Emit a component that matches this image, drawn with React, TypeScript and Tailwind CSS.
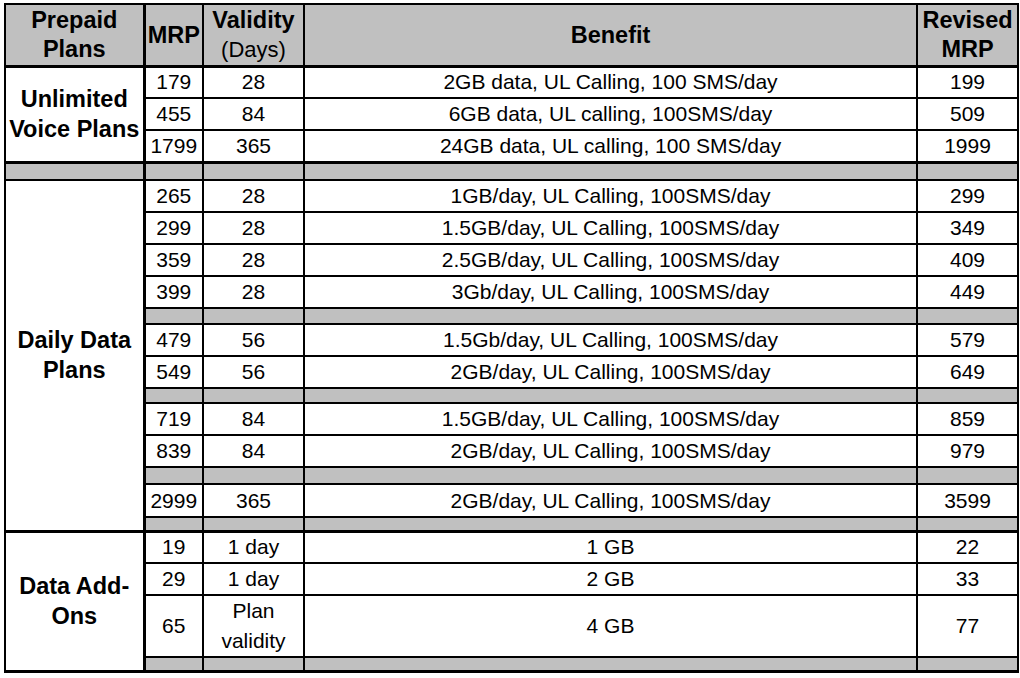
import React from 'react'

type Row = { mrp: string; validity: React.ReactNode; benefit: string; revised: string; h?: string }
type Item = Row | 'band'

const voice: Row[] = [
  { mrp: '179', validity: '28', benefit: '2GB data, UL Calling, 100 SMS/day', revised: '199' },
  { mrp: '455', validity: '84', benefit: '6GB data, UL calling, 100SMS/day', revised: '509' },
  { mrp: '1799', validity: '365', benefit: '24GB data, UL calling, 100 SMS/day', revised: '1999' },
]

const daily: Item[] = [
  { mrp: '265', validity: '28', benefit: '1GB/day, UL Calling, 100SMS/day', revised: '299' },
  { mrp: '299', validity: '28', benefit: '1.5GB/day, UL Calling, 100SMS/day', revised: '349' },
  { mrp: '359', validity: '28', benefit: '2.5GB/day, UL Calling, 100SMS/day', revised: '409' },
  { mrp: '399', validity: '28', benefit: '3Gb/day, UL Calling, 100SMS/day', revised: '449' },
  'band',
  { mrp: '479', validity: '56', benefit: '1.5Gb/day, UL Calling, 100SMS/day', revised: '579' },
  { mrp: '549', validity: '56', benefit: '2GB/day, UL Calling, 100SMS/day', revised: '649' },
  'band',
  { mrp: '719', validity: '84', benefit: '1.5GB/day, UL Calling, 100SMS/day', revised: '859' },
  { mrp: '839', validity: '84', benefit: '2GB/day, UL Calling, 100SMS/day', revised: '979' },
  'band',
  { mrp: '2999', validity: '365', benefit: '2GB/day, UL Calling, 100SMS/day', revised: '3599', h: 'h-[33px]' },
  'band',
]

const addons: Item[] = [
  { mrp: '19', validity: '1 day', benefit: '1 GB', revised: '22' },
  { mrp: '29', validity: '1 day', benefit: '2 GB', revised: '33' },
  {
    mrp: '65',
    validity: (
      <span className="block leading-[30px]">
        Plan
        <br />
        validity
      </span>
    ),
    benefit: '4 GB',
    revised: '77',
    h: 'h-[59px]',
  },
  'band',
]

const cell = 'border-2 border-black text-center align-middle p-0 leading-[24px]'
const label =
  'border-2 border-r-[3px] border-black bg-white text-center align-middle p-0 font-bold text-[23.5px] leading-[30px]'

function DataRow({ row, children, thickBottom }: { row: Row; children?: React.ReactNode; thickBottom?: boolean }) {
  const b = thickBottom ? ' border-b-[3px]' : ''
  return (
    <tr className={row.h ?? 'h-[32px]'}>
      {children}
      <td className={cell + b}>{row.mrp}</td>
      <td className={cell + b}>{row.validity}</td>
      <td className={cell + b}>{row.benefit}</td>
      <td className={cell + b}>{row.revised}</td>
    </tr>
  )
}

function Band({ h, children, thickBottom }: { h: string; children?: React.ReactNode; thickBottom?: boolean }) {
  const b = thickBottom ? ' border-b-[3px]' : ''
  return (
    <tr className={h}>
      {children}
      <td className={cell + b + ' bg-[#c0c0c0]'} />
      <td className={cell + b + ' bg-[#c0c0c0]'} />
      <td className={cell + b + ' bg-[#c0c0c0]'} />
      <td className={cell + b + ' bg-[#c0c0c0]'} />
    </tr>
  )
}

function Section({ title, items, bands }: { title: React.ReactNode; items: Item[]; bands: string[] }) {
  let bi = 0
  return (
    <>
      {items.map((it, i) => {
        const titleCell =
          i === 0 ? (
            <td rowSpan={items.length} className={label + ' border-b-[3px]'}>
              {title}
            </td>
          ) : null
        if (it === 'band') {
          const h = bands[bi++] ?? 'h-[15px]'
          return (
            <Band key={i} h={h} thickBottom={i === items.length - 1}>
              {titleCell}
            </Band>
          )
        }
        return (
          <DataRow key={i} row={it}>
            {titleCell}
          </DataRow>
        )
      })}
    </>
  )
}

export default function App() {
  return (
    <div className="bg-white w-[1020px] h-[678px] pl-[4px] pt-[3px] text-black font-['Liberation_Sans',Arial,sans-serif] text-[21px]">
      <table className="table-fixed border-collapse w-[1013px] border-2 border-black">
        <colgroup>
          <col className="w-[139px]" />
          <col className="w-[59px]" />
          <col className="w-[101px]" />
          <col className="w-[613px]" />
          <col className="w-[101px]" />
        </colgroup>
        <thead>
          <tr className="h-[62px] bg-[#c0c0c0] font-bold text-[23.5px]">
            <td className={cell + ' border-b-[3px] border-r-[3px] leading-[29px]'}>
              Prepaid
              <br />
              Plans
            </td>
            <td className={cell + ' border-b-[3px]'}>MRP</td>
            <td className={cell + ' border-b-[3px] leading-[29px]'}>
              Validity
              <br />
              <span className="font-normal text-[22px]">(Days)</span>
            </td>
            <td className={cell + ' border-b-[3px]'}>Benefit</td>
            <td className={cell + ' border-b-[3px] leading-[29px]'}>
              Revised
              <br />
              MRP
            </td>
          </tr>
        </thead>
        <tbody>
          <DataRow row={voice[0]}>
            <td rowSpan={3} className={label + ' border-b-[3px]'}>
              Unlimited
              <br />
              <span className="whitespace-nowrap">Voice Plans</span>
            </td>
          </DataRow>
          <DataRow row={voice[1]} />
          <DataRow row={voice[2]} thickBottom />
          <Band h="h-[18px]">
            <td className={cell + ' border-r-[3px] bg-[#c0c0c0]'} />
          </Band>
          <Section
            title={
              <>
                Daily Data
                <br />
                Plans
              </>
            }
            items={daily}
            bands={['h-[16px]', 'h-[15px]', 'h-[17px]', 'h-[14px]']}
          />
          <Section
            title={
              <>
                Data Add-
                <br />
                Ons
              </>
            }
            items={addons}
            bands={['h-[14px]']}
          />
        </tbody>
      </table>
    </div>
  )
}
